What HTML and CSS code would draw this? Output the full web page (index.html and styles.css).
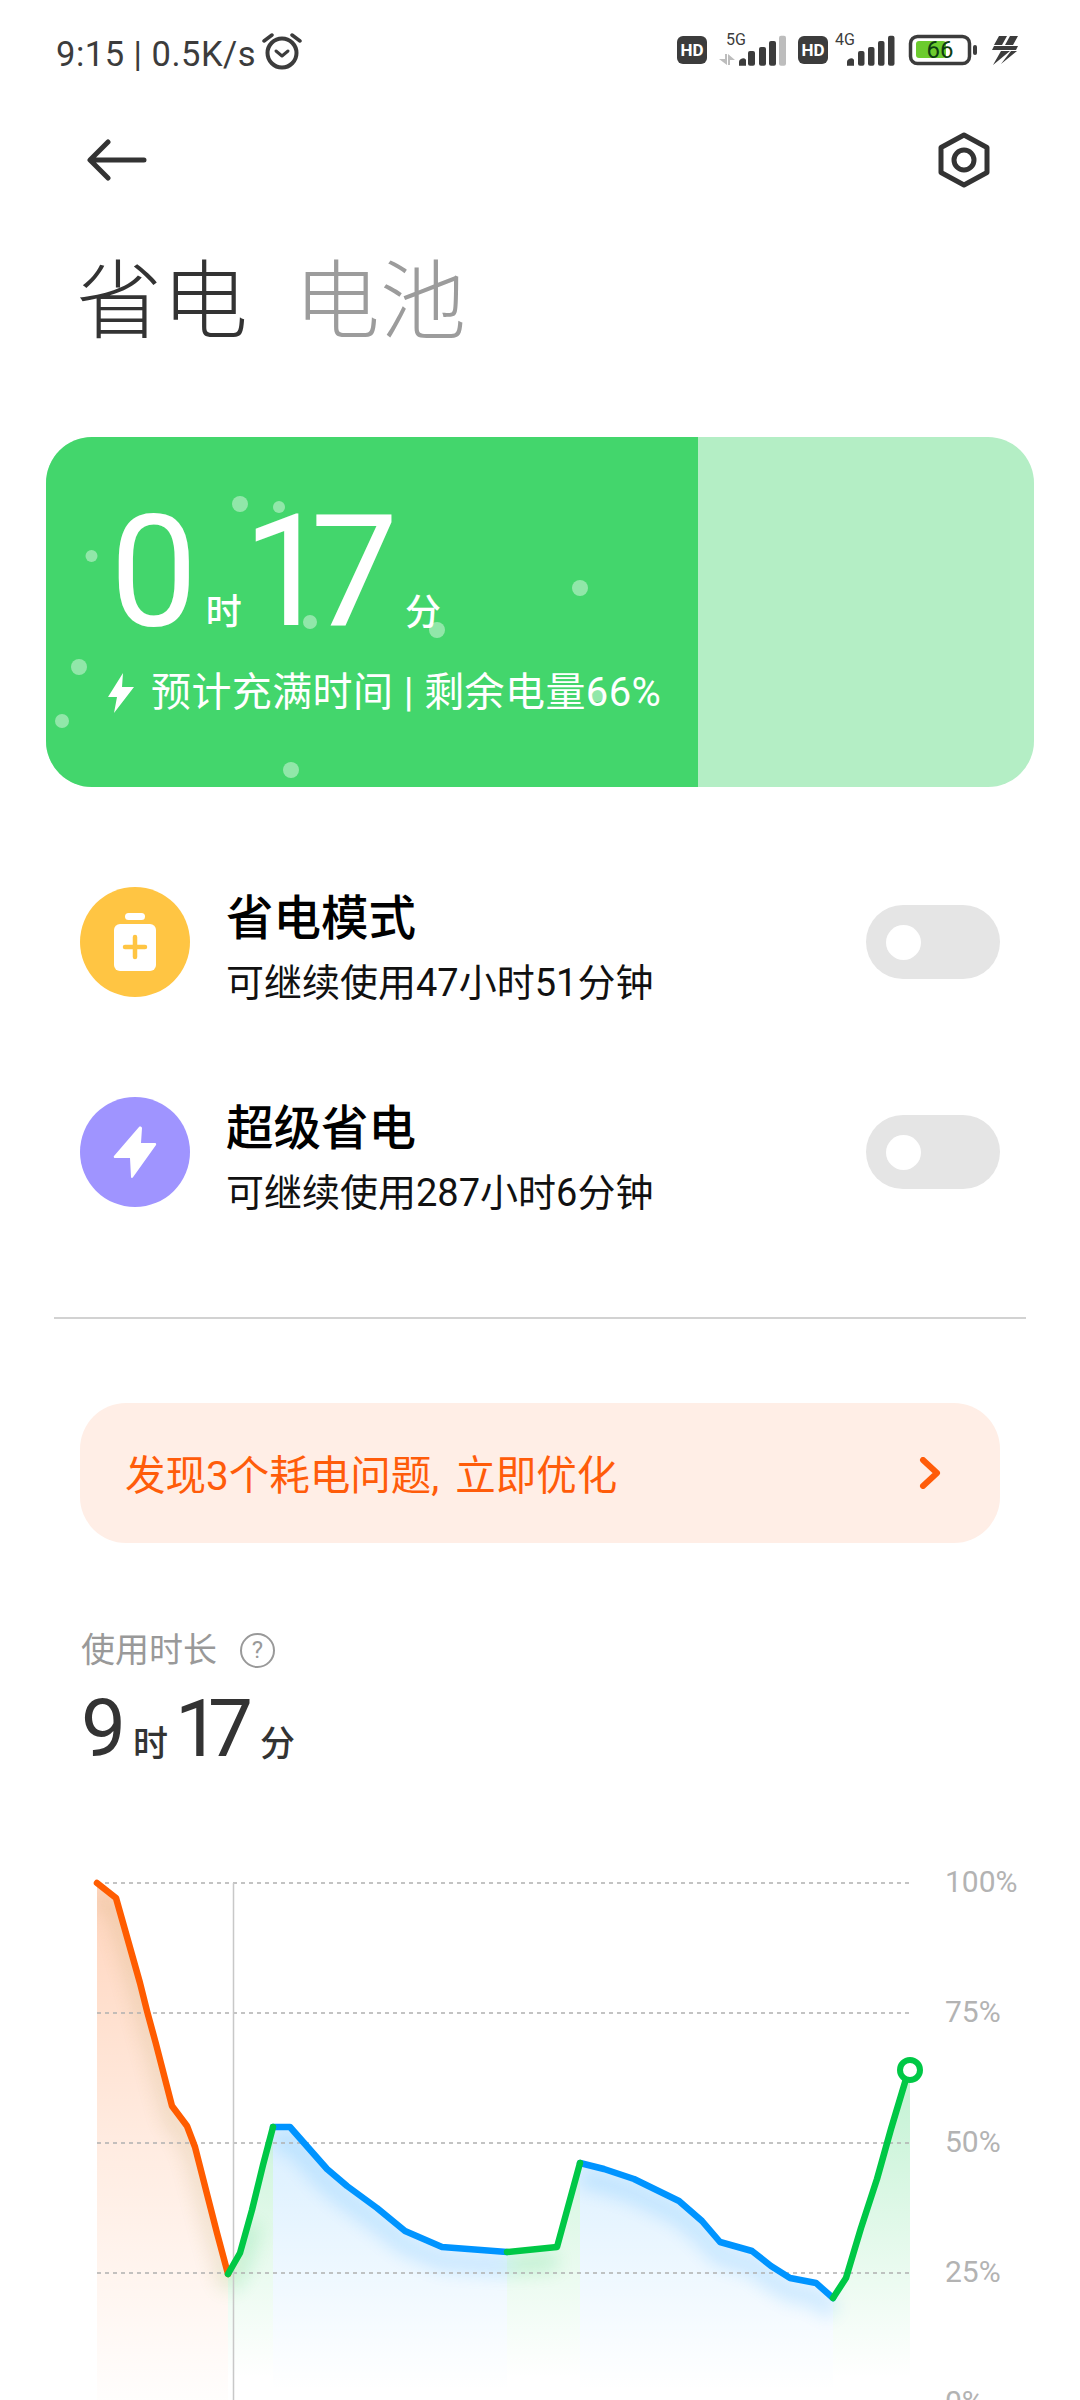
FILE: index.html
```html
<!DOCTYPE html>
<html lang="zh-CN">
<head>
<meta charset="UTF-8">
<meta name="viewport" content="width=device-width, initial-scale=1.0">
<title>省电</title>
<link rel="stylesheet" href="styles.css">
</head>
<body>
<div class="page">

    <header class="status-bar">
        <div class="status-left">
            <span class="status-text">9:15 | 0.5K/s</span>
            <svg class="alarm" width="40" height="38" viewBox="0 0 40 38" fill="none" stroke="#3c3c3c" stroke-linecap="round" stroke-linejoin="round">
                <circle cx="20" cy="21" r="14.5" stroke-width="4"/>
                <path d="M14 19l6 5 6-5" stroke-width="3"/>
                <path d="M2 9l8-6M38 9l-8-6" stroke-width="3.5"/>
            </svg>
        </div>
        <svg class="status-right" width="344" height="40" viewBox="676 32 344 40">
            <rect x="677" y="38" width="30" height="28" rx="6" fill="#3c3c3c"/>
            <text class="hd-label" x="692" y="58">HD</text>
            <text class="net-label" x="726" y="47">5G</text>
            <path d="M725 56h2v11l-8-6h6zM730 67h-2V56l7 6h-5z" fill="#bdbdbd"/>
            <g fill="#3c3c3c">
                <path d="M739 67.700v-3a4 4 0 0 1 7-3v6z"/>
                <rect x="748" y="53" width="7" height="14.700" rx="2"/>
                <rect x="759" y="49" width="7" height="18.700" rx="2"/>
                <rect x="769" y="43" width="7" height="24.700" rx="2"/>
            </g>
            <rect x="779" y="37.700" width="7" height="30" rx="2" fill="#bdbdbd"/>
            <rect x="798" y="38" width="30" height="28" rx="6" fill="#3c3c3c"/>
            <text class="hd-label" x="813" y="58">HD</text>
            <text class="net-label" x="835" y="47">4G</text>
            <g fill="#3c3c3c">
                <path d="M847 67.700v-3a4 4 0 0 1 7-3v6z"/>
                <rect x="858" y="53" width="6.500" height="14.700" rx="2"/>
                <rect x="868" y="49" width="6.500" height="18.700" rx="2"/>
                <rect x="878" y="43" width="6.500" height="24.700" rx="2"/>
                <rect x="888" y="37.700" width="6.500" height="30" rx="2"/>
            </g>
            <rect x="910.500" y="38.500" width="59" height="27" rx="7" fill="none" stroke="#3c3c3c" stroke-width="3.500"/>
            <rect x="916" y="43" width="30" height="17" rx="3" fill="#6ccb2e"/>
            <rect x="973" y="47" width="4" height="10" rx="2" fill="#3c3c3c"/>
            <text class="batt-label" x="940" y="60">66</text>
            <path d="M999 38h8l-5 9h-8zM1010 38h8l-5 9h-8zM994 48h24l-2 4h-24zM1001 53h9l-17 14zM1011 53h6l-16 13z" fill="#3c3c3c"/>
        </svg>
    </header>

    <nav class="toolbar">
        <svg width="60" height="42" viewBox="0 0 60 42" fill="none" stroke="#333" stroke-width="5" stroke-linecap="round" stroke-linejoin="round">
            <path d="M57 21H4M21 3L3 21l18 18"/>
        </svg>
        <svg width="52" height="56" viewBox="0 0 52 56" fill="none" stroke="#333" stroke-width="5" stroke-linejoin="round">
            <path d="M26 3l23 12.500v25L26 53 3 40.500v-25z"/>
            <circle cx="26" cy="28" r="10"/>
        </svg>
    </nav>

    <h1 class="tabs">
        <span class="tab-active">省电</span>
        <span class="tab-muted">电池</span>
    </h1>

    <section class="charge-card">
        <svg class="bubbles" width="1034" height="787" viewBox="0 0 1034 787">
            <circle cx="240" cy="504" r="8"/>
            <circle cx="279" cy="507" r="6"/>
            <circle cx="91.500" cy="556" r="6"/>
            <circle cx="580" cy="588" r="8"/>
            <circle cx="310" cy="622" r="7"/>
            <circle cx="437" cy="630" r="8"/>
            <circle cx="79" cy="667" r="8"/>
            <circle cx="597" cy="695" r="7"/>
            <circle cx="62" cy="721" r="7"/>
            <circle cx="291" cy="770" r="8"/>
        </svg>
        <div class="charge-fill">
            <div class="charge-time">
                <span class="charge-num">0</span>
                <span class="charge-unit">时</span>
                <span class="charge-num charge-num-min">17</span>
                <span class="charge-unit charge-unit-min">分</span>
            </div>
            <div class="charge-info">
                <svg width="26" height="40" viewBox="0 0 26 40"><path d="M15 0L0 24h9l-3 16 20-26H14z" fill="#fff"/></svg>
                <span>预计充满时间 | 剩余电量66%</span>
            </div>
        </div>
    </section>

    <section class="modes">
        <div class="mode-row">
            <div class="mode-icon icon-yellow">
                <svg width="44" height="58" viewBox="0 0 44 58">
                    <rect x="12" y="0" width="20" height="7" rx="3.500" fill="#fff"/>
                    <rect x="1" y="11" width="42" height="47" rx="6" fill="#fff"/>
                    <path d="M22 24v20M12 34h20" stroke="#ffc543" stroke-width="4.500" stroke-linecap="round"/>
                </svg>
            </div>
            <div class="mode-text">
                <div class="mode-title">省电模式</div>
                <div class="mode-sub">可继续使用47小时51分钟</div>
            </div>
            <div class="toggle"><span class="knob"></span></div>
        </div>
        <div class="mode-row">
            <div class="mode-icon icon-purple">
                <svg width="44" height="52" viewBox="0 0 44 52"><path d="M26 1L1 30c-.6.8 0 2 1 2h15l1 19c0 1 1.300 1.200 1.800.4L43 19c.5-.8 0-2-1-2H28l1-15c0-1.300-2-2-3-1z" fill="#fff"/></svg>
            </div>
            <div class="mode-text">
                <div class="mode-title">超级省电</div>
                <div class="mode-sub">可继续使用287小时6分钟</div>
            </div>
            <div class="toggle"><span class="knob"></span></div>
        </div>
    </section>

    <hr class="divider">

    <a class="banner">
        <span>发现3个耗电问题, 立即优化</span>
        <svg width="22" height="32" viewBox="0 0 22 32" fill="none" stroke="#ff5c0a" stroke-width="6" stroke-linecap="round" stroke-linejoin="round"><path d="M4 3l14 13L4 29"/></svg>
    </a>

    <section class="usage">
        <div class="usage-label">
            <span>使用时长</span>
            <span class="help">?</span>
        </div>
        <div class="usage-time">
            <span class="usage-num">9</span>
            <span class="usage-unit">时</span>
            <span class="usage-num usage-num-min">17</span>
            <span class="usage-unit">分</span>
        </div>
    </section>

    <svg class="chart" width="1080" height="540" viewBox="0 1860 1080 540">
        <defs>
            <linearGradient id="fadeOrange" gradientUnits="userSpaceOnUse" x1="0" y1="1883" x2="0" y2="2400">
                <stop offset="0" stop-color="#ff5c00" stop-opacity=".26"/>
                <stop offset=".5" stop-color="#ff5c00" stop-opacity=".12"/>
                <stop offset="1" stop-color="#ff5c00" stop-opacity=".01"/>
            </linearGradient>
            <linearGradient id="fadeGreen" gradientUnits="userSpaceOnUse" x1="0" y1="2070" x2="0" y2="2378">
                <stop offset="0" stop-color="#00c846" stop-opacity=".24"/>
                <stop offset="1" stop-color="#00c846" stop-opacity="0"/>
            </linearGradient>
            <linearGradient id="fadeBlue" gradientUnits="userSpaceOnUse" x1="0" y1="2127" x2="0" y2="2390">
                <stop offset="0" stop-color="#0094ff" stop-opacity=".15"/>
                <stop offset="1" stop-color="#0094ff" stop-opacity="0"/>
            </linearGradient>
            <filter id="soft" x="-20%" y="-20%" width="140%" height="140%"><feGaussianBlur stdDeviation="9"/></filter>
            <clipPath id="underLine">
                <path d="M97 1883L116 1898 140 1983 147 2011 156 2044 172 2106 187 2126 195 2147 207 2194 217 2233 228 2274 240 2253 252 2210 263 2165 273 2127 290 2127 327 2169 347 2186 377 2208 405 2231 442 2247 507 2252 557 2247 580 2163 604 2169 634 2179 679 2201 702 2221 720 2242 752 2251 771 2266 790 2278 816 2283 833 2298 846 2278 861 2228 877 2179 891 2129 906 2079 910 2070V2400H97z"/>
            </clipPath>
        </defs>

        <path d="M97 1883L116 1898 140 1983 147 2011 156 2044 172 2106 187 2126 195 2147 207 2194 217 2233 228 2274V2400H97z" fill="url(#fadeOrange)"/>
        <path d="M228 2274L240 2253 252 2210 263 2165 273 2127V2400H228z" fill="url(#fadeGreen)"/>
        <path d="M273 2127L290 2127 327 2169 347 2186 377 2208 405 2231 442 2247 507 2252V2400H273z" fill="url(#fadeBlue)"/>
        <path d="M507 2252L557 2247 580 2163V2400H507z" fill="url(#fadeGreen)"/>
        <path d="M580 2163L604 2169 634 2179 679 2201 702 2221 720 2242 752 2251 771 2266 790 2278 816 2283 833 2298V2400H580z" fill="url(#fadeBlue)"/>
        <path d="M833 2298L846 2278 861 2228 877 2179 891 2129 906 2079 910 2070V2400H833z" fill="url(#fadeGreen)"/>

        <g clip-path="url(#underLine)">
            <g fill="none" stroke-width="18" filter="url(#soft)" transform="translate(0 14)" opacity=".16">
                <path stroke="#a58c3c" d="M97 1883L116 1898 140 1983 147 2011 156 2044 172 2106 187 2126 195 2147 207 2194 217 2233 228 2274"/>
                <path stroke="#0094ff" d="M273 2127L290 2127 327 2169 347 2186 377 2208 405 2231 442 2247 507 2252M580 2163L604 2169 634 2179 679 2201 702 2221 720 2242 752 2251 771 2266 790 2278 816 2283 833 2298"/>
                <path stroke="#00c846" d="M228 2274L240 2253 252 2210M507 2252L557 2247"/>
            </g>
        </g>

        <g class="grid">
            <path d="M97 1883H913M97 2013H913M97 2143H913M97 2273H913"/>
        </g>
        <path d="M233.500 1883V2400" stroke="#c8c8c8" stroke-width="1.500"/>

        <g fill="none" stroke-width="6.500" stroke-linejoin="round" stroke-linecap="round">
            <path stroke="#ff5c00" d="M97 1883L116 1898 140 1983 147 2011 156 2044 172 2106 187 2126 195 2147 207 2194 217 2233 228 2274"/>
            <path stroke="#0094ff" d="M273 2127L290 2127 327 2169 347 2186 377 2208 405 2231 442 2247 507 2252"/>
            <path stroke="#0094ff" d="M580 2163L604 2169 634 2179 679 2201 702 2221 720 2242 752 2251 771 2266 790 2278 816 2283 833 2298"/>
            <path stroke="#00c846" d="M228 2274L240 2253 252 2210 263 2165 273 2127"/>
            <path stroke="#00c846" d="M507 2252L557 2247 580 2163"/>
            <path stroke="#00c846" d="M833 2298L846 2278 861 2228 877 2179 891 2129 906 2079"/>
        </g>
        <circle cx="910" cy="2070" r="10" fill="#fff" stroke="#00c846" stroke-width="6"/>

        <g class="axis">
            <text x="945" y="1892">100%</text>
            <text x="945" y="2022">75%</text>
            <text x="945" y="2152">50%</text>
            <text x="945" y="2282">25%</text>
            <text x="945" y="2412">0%</text>
        </g>
    </svg>

</div>
</body>
</html>
```

FILE: styles.css
```css
body {
    margin: 0;
    background-color: #fff;
    font-family: Roboto, "Noto Sans CJK SC", sans-serif;
}

.page {
    width: 1080px;
    height: 2400px;
    overflow: hidden;
    position: relative;
}

/* status bar */
.status-bar {
    height: 108px;
    display: flex;
    justify-content: space-between;
    align-items: center;
    padding: 0 60px 0 56px;
    box-sizing: border-box;
}

.status-left {
    display: flex;
    align-items: center;
    gap: 6px;
}

.status-text {
    font-size: 34.5px;
    letter-spacing: .5px;
    color: #3c3c3c;
    line-height: 40px;
}

.alarm {
    margin-top: -6px;
}

.status-right {
    margin-top: -8px;
}

.hd-label {
    font: 700 17px Roboto, sans-serif;
    fill: #fff;
    text-anchor: middle;
}

.net-label {
    font: 400 16px Roboto, sans-serif;
    fill: #3c3c3c;
}

.batt-label {
    font: 400 24px Roboto, sans-serif;
    fill: #0d3d12;
    text-anchor: middle;
}

/* toolbar */
.toolbar {
    height: 104px;
    display: flex;
    justify-content: space-between;
    align-items: center;
    padding: 0 90px 0 87px;
}

/* tabs */
.tabs {
    height: 170px;
    margin: 0;
    padding: 6px 0 0 76px;
    display: flex;
    align-items: center;
    gap: 46px;
    font-size: 86px;
    font-weight: 300;
    line-height: 1;
}

.tab-active {
    color: #333;
}

.tab-muted {
    color: #9c9c9c;
}

/* charge card */
.charge-card {
    height: 350px;
    margin: 49px 46px 0;
    border-radius: 46px;
    background-color: #b4eec5;
    overflow: hidden;
    position: relative;
}

.charge-fill {
    width: 652px;
    height: 100%;
    background-color: #43d66c;
    box-sizing: border-box;
    padding: 50px 0 0 64px;
}

.bubbles {
    position: absolute;
    left: -46px;
    top: -437px;
    fill: #fff;
    fill-opacity: .42;
    z-index: 1;
}

.charge-time {
    display: flex;
    align-items: baseline;
    color: #fff;
    height: 170px;
    position: relative;
    z-index: 2;
}

.charge-num {
    font-size: 156px;
    font-weight: 450;
    line-height: 170px;
}

.charge-num-min {
    margin-left: 1px;
    letter-spacing: -20px;
}

.charge-unit {
    font-size: 36px;
    font-weight: 500;
    margin-left: 8px;
}

.charge-unit-min {
    margin-left: 27px;
}

.charge-info {
    display: flex;
    align-items: center;
    gap: 17px;
    margin-top: 14px;
    margin-left: -2px;
    color: #fff;
    font-size: 40px;
    letter-spacing: .4px;
    line-height: 44px;
    white-space: nowrap;
    position: relative;
    z-index: 2;
}

/* modes */
.modes {
    margin-top: 100px;
    padding: 0 80px;
    display: flex;
    flex-direction: column;
    gap: 100px;
}

.mode-row {
    height: 110px;
    display: flex;
    align-items: center;
}

.mode-icon {
    width: 110px;
    height: 110px;
    border-radius: 50%;
    display: flex;
    align-items: center;
    justify-content: center;
    flex-shrink: 0;
}

.icon-yellow {
    background-color: #ffc543;
}

.icon-purple {
    background-color: #9f94ff;
}

.mode-text {
    flex: 1;
    margin-left: 36px;
    padding-top: 14px;
}

.mode-title {
    font-size: 47.5px;
    font-weight: 500;
    color: #000;
    line-height: 60px;
}

.mode-sub {
    font-size: 38px;
    color: #111;
    line-height: 52px;
    margin-top: 8px;
}

.toggle {
    width: 134px;
    height: 74px;
    border-radius: 37px;
    background-color: #e5e5e5;
    display: flex;
    align-items: center;
    padding-left: 20px;
    box-sizing: border-box;
}

.knob {
    width: 35px;
    height: 35px;
    border-radius: 50%;
    background-color: #fff;
}

.divider {
    margin: 110px 54px 0;
    border: none;
    border-top: 2px solid #d2d2d2;
}

/* banner */
.banner {
    height: 140px;
    margin: 84px 80px 0;
    padding: 0 59px 0 45px;
    border-radius: 46px;
    background-color: #ffeee6;
    color: #ff5c0a;
    font-size: 40.5px;
    word-spacing: 6px;
    display: flex;
    align-items: center;
    justify-content: space-between;
}

.banner span {
    margin-top: -2px;
}

/* usage */
.usage {
    margin-top: 88px;
    padding-left: 81px;
}

.usage-label {
    display: flex;
    align-items: center;
    gap: 23px;
    color: #999;
    font-size: 34px;
    line-height: 38px;
}

.help {
    width: 31px;
    height: 31px;
    border: 2px solid #999;
    border-radius: 50%;
    font-size: 24px;
    line-height: 31px;
    text-align: center;
}

.usage-time {
    display: flex;
    align-items: baseline;
    color: #333;
    height: 90px;
    margin-top: 15px;
}

.usage-num {
    font-size: 80px;
    font-weight: 450;
    line-height: 90px;
}

.usage-num-min {
    letter-spacing: -12px;
}

.usage-unit {
    font-size: 35px;
    font-weight: 500;
    margin: 0 7px 0 7px;
}

.usage-num-min + .usage-unit {
    margin-left: 19px;
}

/* chart */
.chart {
    display: block;
    position: absolute;
    left: 0;
    top: 1860px;
}

.grid path {
    fill: none;
    stroke: #b0b0b0;
    stroke-width: 1.500;
    stroke-dasharray: 4 4;
}

.axis text {
    font-size: 30px;
    fill: #b3b3b3;
}
```
